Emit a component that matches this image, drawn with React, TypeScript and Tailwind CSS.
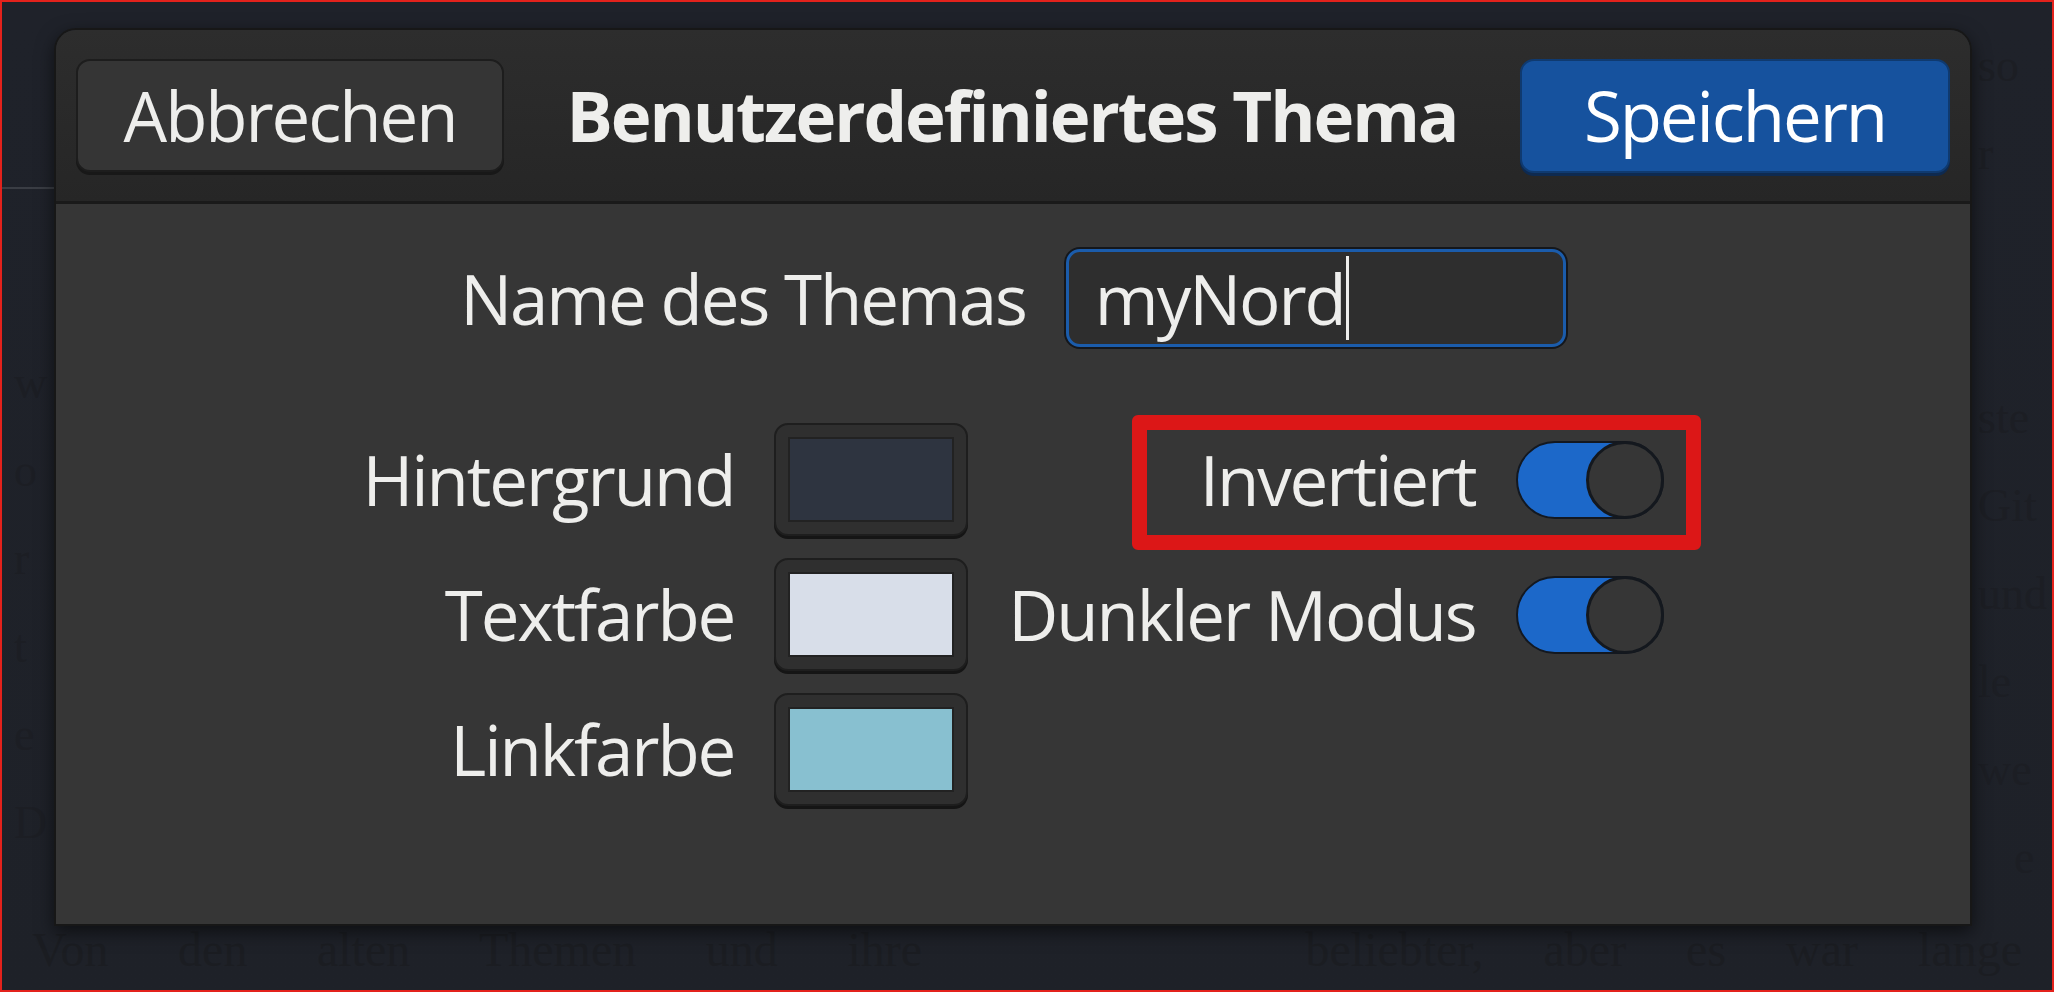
import { ReactNode } from 'react';

const font = { fontFamily: '"Open Sans", "Noto Sans", sans-serif' };
const serif = { fontFamily: '"Liberation Serif", serif' };

const swatches = [
  { label: 'Hintergrund', color: 'bg-[#2e3440]' },
  { label: 'Textfarbe', color: 'bg-[#d8dee9]' },
  { label: 'Linkfarbe', color: 'bg-[#88c0d0]' },
];

function Label({ children }: { children: ReactNode }) {
  return (
    <span className="text-[69px] leading-none tracking-[-0.03em] text-[#eeeeec] text-right whitespace-nowrap">
      {children}
    </span>
  );
}

function Swatch({ color }: { color: string }) {
  return (
    <button className="w-[194px] h-[113px] rounded-[14px] bg-[#2f2f2f] border-2 border-[#1e1e1e] shadow-[0_3px_0_#151515] p-[12px]">
      <div className={`w-full h-full border-2 border-[#222222] ${color}`} />
    </button>
  );
}

function Switch() {
  return (
    <div className="w-[148px] h-[78px] rounded-full bg-[#1c68c9] border-2 border-[#131820] flex justify-end">
      <div className="w-[78px] h-[78px] -my-[2px] -mr-[2px] rounded-full bg-[#363636] border-[3px] border-[#14181e]" />
    </div>
  );
}

export default function App() {
  return (
    <div
      className="relative w-[2054px] h-[992px] overflow-hidden border-2 border-[#e3221c] bg-gradient-to-b from-[#1f222a] to-[#1e2128] flex flex-col"
      style={font}
    >
      {/* page behind the dialog, only its edges show */}
      <div className="flex-1 flex justify-between text-[46px] leading-[88px] text-[#1c1e24]" style={serif}>
        <div className="w-[54px] flex flex-col">
          <div className="h-[2px] mt-[185px] bg-[#3a3d44]" />
          <div className="pt-[150px] pl-[12px]">
            <p>w</p>
            <p>o</p>
            <p>r</p>
            <p>t</p>
            <p>e</p>
            <p>D</p>
          </div>
        </div>
        <div className="w-[80px] pt-[20px] pl-[6px] flex flex-col whitespace-nowrap">
          <p>so</p>
          <p>r</p>
          <p className="mt-[176px]">ste</p>
          <p>Git</p>
          <p>und</p>
          <p>le</p>
          <p>we</p>
          <p className="pl-[36px]">e</p>
        </div>
      </div>
      <div className="h-[66px] flex justify-between items-start px-[30px] text-[48px] leading-[52px] text-[#1b1d22]" style={serif}>
        <p className="[word-spacing:1.2em]">Von den alten Themen und ihre</p>
        <p className="[word-spacing:1em]">beliebter, aber es war lange</p>
      </div>

      {/* dialog */}
      <div className="absolute left-[52px] top-[26px] w-[1918px] h-[898px] flex flex-col rounded-t-[22px] border-2 border-[#171717] shadow-[0_6px_18px_rgba(0,0,0,0.55)] overflow-hidden">
        <div className="h-[174px] shrink-0 flex items-center justify-between px-[20px] bg-gradient-to-b from-[#2d2d2d] to-[#262626] border-b-[3px] border-[#1a1a1a]">
          <button className="w-[428px] h-[113px] rounded-[14px] bg-[#353535] border-2 border-[#1d1d1d] shadow-[0_3px_0_#181818] text-[69px] leading-none tracking-[-0.03em] text-[#eeeeec]">
            Abbrechen
          </button>
          <h1 className="text-[69px] leading-none font-bold tracking-[-0.03em] text-[#eeeeec]">
            Benutzerdefiniertes Thema
          </h1>
          <button className="w-[430px] h-[114px] rounded-[14px] bg-[#16529e] border-2 border-[#0f3a70] shadow-[0_3px_0_#0e2a50] text-[69px] leading-none tracking-[-0.03em] text-white">
            Speichern
          </button>
        </div>

        <div className="flex-1 bg-[#363636] flex flex-col items-center pt-[45px]">
          {/* theme name */}
          <div className="flex items-center gap-[40px]">
            <Label>Name des Themas</Label>
            <div className="w-[500px] h-[98px] rounded-[14px] border-[3px] border-[#1b5cab] bg-[#2e2e2e] shadow-[0_0_0_2px_#14171c] flex items-center pl-[26px]">
              <span className="text-[69px] leading-none tracking-[-0.03em] text-[#eeeeec]">myNord</span>
              <span className="w-[3px] h-[84px] bg-[#eeeeec] ml-[1px]" />
            </div>
          </div>

          {/* colours and toggles */}
          <div className="mt-[76px] grid grid-cols-[auto_auto_auto_auto] gap-x-[40px] gap-y-[22px] items-center justify-items-end">
            <Label>{swatches[0].label}</Label>
            <Swatch color={swatches[0].color} />
            <Label>Invertiert</Label>
            <div className="relative">
              <Switch />
              <div className="absolute -left-[384px] -right-[37px] -top-[26px] -bottom-[31px] border-[15px] border-[#dc1717] rounded-[6px]" />
            </div>

            <Label>{swatches[1].label}</Label>
            <Swatch color={swatches[1].color} />
            <Label>Dunkler Modus</Label>
            <Switch />

            <Label>{swatches[2].label}</Label>
            <Swatch color={swatches[2].color} />
          </div>
        </div>
      </div>
    </div>
  );
}
